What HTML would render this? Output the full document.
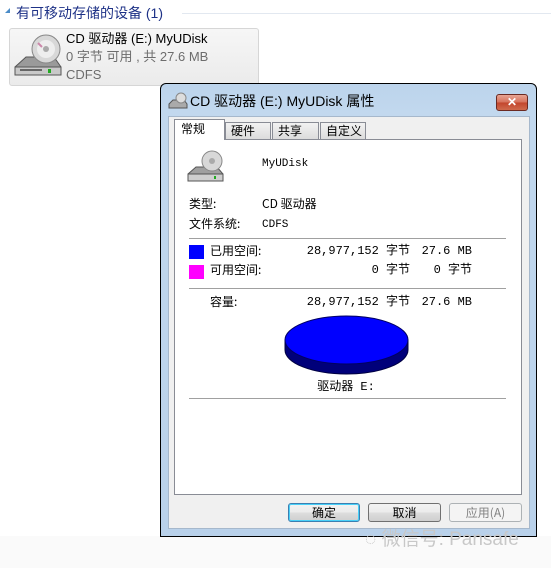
<!DOCTYPE html>
<html><head><meta charset="utf-8"><style>
*{margin:0;padding:0;box-sizing:border-box}
body{width:551px;height:568px;background:#fff;position:relative;overflow:hidden;font-family:"Liberation Sans","Noto Sans CJK SC",sans-serif}
.a{position:absolute;white-space:nowrap}
.m{font-family:"Liberation Mono","Noto Sans CJK SC",monospace;font-size:11px;color:#000;line-height:12px}
.c{font-family:"Noto Sans CJK SC",sans-serif;font-size:12px;line-height:14px;color:#000}
.btn{position:absolute;height:19px;border:1px solid #707070;border-radius:3px;background:linear-gradient(#f2f2f2,#ebebeb 50%,#dddddd 51%,#cfcfcf);font-family:"Noto Sans CJK SC",sans-serif;font-size:12px;line-height:17px;text-align:center}
</style></head><body>
<div class="a" style="left:0;top:536px;width:551px;height:32px;background:#fafafa"></div>
<div class="a" style="left:5px;top:8px;width:0;height:0;border-left:5px solid transparent;border-bottom:5px solid #4b8cc8"></div>
<div class="a" style="left:16px;top:4px;font-size:14px;color:#1e3287;font-family:'Liberation Sans','Noto Sans CJK SC',sans-serif;line-height:18px">有可移动存储的设备 (1)</div>
<div class="a" style="left:182px;top:13px;width:369px;height:1px;background:#e2e8f0"></div>
<div class="a" style="left:9px;top:28px;width:250px;height:58px;border:1px solid #d6d6d6;border-radius:3px;background:linear-gradient(#f6f6f6,#ebebeb)"></div>
<svg class="a" style="left:12px;top:33px" width="52" height="50" viewBox="0 0 52 50">
<path d="M3 34 L14 24 L42 24 L49 34 L49 42 L3 42Z" fill="#9a9a9a" stroke="#555" stroke-width="1"/>
<path d="M3 34 L49 34 L49 42 L3 42Z" fill="#c9c9c9" stroke="#555"/>
<rect x="8" y="36" width="22" height="2" fill="#666"/><rect x="36" y="36" width="3" height="4" fill="#2a2"/>
<circle cx="34" cy="16" r="14" fill="#d8d8d8" stroke="#888"/><circle cx="34" cy="16" r="9" fill="#eee"/><circle cx="34" cy="16" r="3" fill="#aaa"/>
<path d="M26 10 L30 14" stroke="#c8a" stroke-width="2"/></svg>
<div class="a" style="left:66px;top:30px;font-size:13px;line-height:17px">CD 驱动器 (E:) MyUDisk</div>
<div class="a" style="left:66px;top:48px;font-size:13px;line-height:17px;color:#6d6d6d">0 字节 可用 , 共 27.6 MB</div>
<div class="a" style="left:66px;top:66px;font-size:13px;line-height:17px;color:#6d6d6d">CDFS</div>

<div class="a" style="left:160px;top:83px;width:377px;height:454px;border:1px solid #000;border-radius:6px 6px 0 0;background:linear-gradient(#bcd4ec,#c2d8ee 30px,#b9d1ea)"></div>
<svg class="a" style="left:168px;top:92px" width="20" height="18" viewBox="0 0 20 18"><path d="M1 12 L5 8 L16 8 L19 12 L19 16 L1 16Z" fill="#aaa" stroke="#555"/><circle cx="13" cy="6" r="5" fill="#ddd" stroke="#888"/></svg>
<div class="a" style="left:190px;top:92px;font-size:14px;line-height:18px">CD 驱动器 (E:) MyUDisk 属性</div>
<div class="a" style="left:496px;top:94px;width:32px;height:17px;border:1px solid #6b2a22;border-radius:3px;background:linear-gradient(#e8a493,#d6705a 50%,#c2452c 51%,#cf6a4d);color:#fff;font-size:12px;font-weight:bold;text-align:center;line-height:15px">✕</div>
<div class="a" style="left:168px;top:116px;width:362px;height:413px;background:#f0f0f0;border:1px solid #a6b8cc"></div>
<div class="a" style="left:174px;top:139px;width:348px;height:356px;background:#fff;border:1px solid #898c95"></div>
<div class="a c" style="left:174px;top:119px;width:51px;height:21px;background:#fff;border:1px solid #898c95;border-bottom:none;padding:2px 0 0 6px">常规</div>
<div class="a c" style="left:225px;top:122px;width:46px;height:17px;background:linear-gradient(#f2f2f2,#dcdcdc);border:1px solid #898c95;border-bottom:none;padding:1px 0 0 5px">硬件</div>
<div class="a c" style="left:272px;top:122px;width:47px;height:17px;background:linear-gradient(#f2f2f2,#dcdcdc);border:1px solid #898c95;border-bottom:none;padding:1px 0 0 5px">共享</div>
<div class="a c" style="left:320px;top:122px;width:46px;height:17px;background:linear-gradient(#f2f2f2,#dcdcdc);border:1px solid #898c95;border-bottom:none;padding:1px 0 0 5px">自定义</div>
<svg class="a" style="left:187px;top:150px" width="38" height="36" viewBox="0 0 38 36"><path d="M1 24 L9 17 L30 17 L36 24 L36 31 L1 31Z" fill="#a0a0a0" stroke="#555"/><path d="M1 24 L36 24 L36 31 L1 31Z" fill="#cfcfcf" stroke="#555"/><rect x="27" y="26" width="2" height="3" fill="#2a2"/><circle cx="25" cy="11" r="10" fill="#d8d8d8" stroke="#888"/><circle cx="25" cy="11" r="3" fill="#aaa"/></svg>
<div class="a m" style="left:262px;top:158px">MyUDisk</div>
<div class="a c" style="left:189px;top:197px">类型:</div><div class="a c" style="left:262px;top:197px">CD 驱动器</div>
<div class="a c" style="left:189px;top:217px">文件系统:</div><div class="a m" style="left:262px;top:219px">CDFS</div>
<div class="a" style="left:189px;top:238px;width:317px;height:1px;background:#a0a0a0"></div>
<div class="a" style="left:189px;top:245px;width:15px;height:14px;background:#0000ff"></div>
<div class="a" style="left:189px;top:265px;width:15px;height:14px;background:#ff00ff"></div>
<div class="a c" style="left:210px;top:244px">已用空间:</div>
<div class="a c" style="left:210px;top:263px">可用空间:</div>
<div class="a c" style="left:210px;top:295px">容量:</div>
<div class="a c" style="right:141px;top:244px;font-family:'Liberation Mono','Noto Sans CJK SC',monospace">28,977,152 字节</div>
<div class="a c" style="right:79px;top:244px;font-family:'Liberation Mono','Noto Sans CJK SC',monospace">27.6 MB</div>
<div class="a c" style="right:141px;top:263px;font-family:'Liberation Mono','Noto Sans CJK SC',monospace">0 字节</div>
<div class="a c" style="right:79px;top:263px;font-family:'Liberation Mono','Noto Sans CJK SC',monospace">0 字节</div>
<div class="a c" style="right:141px;top:295px;font-family:'Liberation Mono','Noto Sans CJK SC',monospace">28,977,152 字节</div>
<div class="a c" style="right:79px;top:295px;font-family:'Liberation Mono','Noto Sans CJK SC',monospace">27.6 MB</div>
<div class="a" style="left:189px;top:288px;width:317px;height:1px;background:#a0a0a0"></div>
<svg class="a" style="left:284px;top:314px" width="126" height="62" viewBox="0 0 126 62"><path d="M1 26 L1 36 A61.5 24 0 0 0 124 36 L124 26Z" fill="#00007a" stroke="#000040" stroke-width="1"/><ellipse cx="62.5" cy="26" rx="61.5" ry="24" fill="#0000ff" stroke="#000060"/></svg>
<div class="a c" style="left:0;width:692px;text-align:center;top:380px;font-family:'Liberation Mono','Noto Sans CJK SC',monospace">驱动器 E:</div>
<div class="a" style="left:189px;top:398px;width:317px;height:1px;background:#a0a0a0"></div>
<div class="btn" style="left:288px;top:503px;width:72px;border-color:#3c7fb1;box-shadow:inset 0 0 0 1px #48d0f8">确定</div>
<div class="btn" style="left:368px;top:503px;width:73px">取消</div>
<div class="btn" style="left:449px;top:503px;width:73px;background:#f4f4f4;border-color:#adb2b5;color:#838383">应用(A)</div>
<div class="a" style="left:365px;top:528px;font-size:19px;line-height:24px;color:#c8c8c8;font-family:'Liberation Sans','Noto Sans CJK SC',sans-serif">◌ 微信号: Pansafe</div>
</body></html>
